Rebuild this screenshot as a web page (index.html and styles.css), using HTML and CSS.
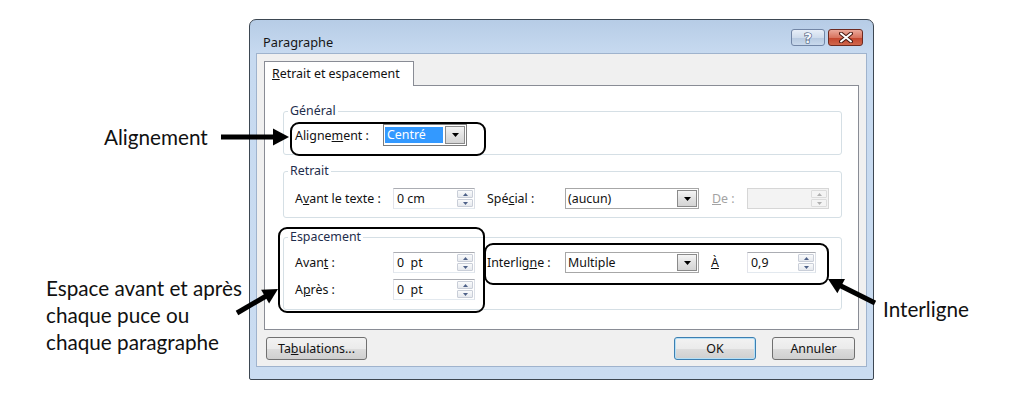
FILE: index.html
```html
<!DOCTYPE html>
<html lang="fr">
<head>
    <meta charset="UTF-8">
    <title>Paragraphe</title>
    <link rel="stylesheet" href="styles.css">
</head>
<body>
<div class="stage">
    <div class="dialog">
        <div class="titlebar">
            <span class="title">Paragraphe</span>
            <div class="caption">
                <span class="cap-btn cap-help">
                    <svg width="14" height="14" viewBox="0 0 14 14"><text x="7" y="12" text-anchor="middle" class="help-glyph">?</text></svg>
                </span>
                <span class="cap-btn cap-close">
                    <svg width="14" height="11" viewBox="0 0 14 11">
                        <path d="M2 1.5 L12 9.5 M12 1.5 L2 9.5" stroke="#4a1a12" stroke-width="4" stroke-linecap="round"/>
                        <path d="M2 1.5 L12 9.5 M12 1.5 L2 9.5" stroke="#ffffff" stroke-width="2" stroke-linecap="round"/>
                    </svg>
                </span>
            </div>
        </div>

        <div class="client">
            <div class="tab"><u>R</u>etrait et espacement</div>
            <div class="panel">
                <fieldset class="group group-general">
                    <legend>Général</legend>
                    <div class="row row-align">
                        <span class="lbl lbl-align">Aligne<u>m</u>ent :</span>
                        <span class="combo combo-align">
                            <span class="combo-val"><span class="sel">Centré</span></span>
                            <span class="drop"><svg width="7" height="4" viewBox="0 0 7 4"><polygon points="0,0 7,0 3.5,4" fill="#000"/></svg></span>
                        </span>
                    </div>
                </fieldset>

                <fieldset class="group group-retrait">
                    <legend>Retrait</legend>
                    <div class="row row-retrait">
                        <span class="lbl">A<u>v</u>ant le texte :</span>
                        <span class="spin">
                            <span class="spin-val">0 cm</span>
                            <span class="spin-btns">
                                <span class="spin-btn"><svg width="5" height="3" viewBox="0 0 5 3"><polygon points="0,3 2.5,0 5,3"/></svg></span>
                                <span class="spin-btn"><svg width="5" height="3" viewBox="0 0 5 3"><polygon points="0,0 5,0 2.5,3"/></svg></span>
                            </span>
                        </span>
                        <span class="lbl lbl-mid">Spé<u>c</u>ial :</span>
                        <span class="combo">
                            <span class="combo-val">(aucun)</span>
                            <span class="drop"><svg width="7" height="4" viewBox="0 0 7 4"><polygon points="0,0 7,0 3.5,4" fill="#000"/></svg></span>
                        </span>
                        <span class="lbl lbl-end lbl-off"><u>D</u>e :</span>
                        <span class="spin spin-off">
                            <span class="spin-val"></span>
                            <span class="spin-btns">
                                <span class="spin-btn"><svg width="5" height="3" viewBox="0 0 5 3"><polygon points="0,3 2.5,0 5,3"/></svg></span>
                                <span class="spin-btn"><svg width="5" height="3" viewBox="0 0 5 3"><polygon points="0,0 5,0 2.5,3"/></svg></span>
                            </span>
                        </span>
                    </div>
                </fieldset>

                <fieldset class="group group-space">
                    <legend>Espacement</legend>
                    <div class="row row-space">
                        <span class="lbl">Avan<u>t</u> :</span>
                        <span class="spin">
                            <span class="spin-val">0  pt</span>
                            <span class="spin-btns">
                                <span class="spin-btn"><svg width="5" height="3" viewBox="0 0 5 3"><polygon points="0,3 2.5,0 5,3"/></svg></span>
                                <span class="spin-btn"><svg width="5" height="3" viewBox="0 0 5 3"><polygon points="0,0 5,0 2.5,3"/></svg></span>
                            </span>
                        </span>
                        <span class="lbl lbl-mid">Interlig<u>n</u>e :</span>
                        <span class="combo">
                            <span class="combo-val">Multiple</span>
                            <span class="drop"><svg width="7" height="4" viewBox="0 0 7 4"><polygon points="0,0 7,0 3.5,4" fill="#000"/></svg></span>
                        </span>
                        <span class="lbl lbl-end lbl-a"><u>À</u></span>
                        <span class="spin spin-small">
                            <span class="spin-val">0,9</span>
                            <span class="spin-btns">
                                <span class="spin-btn"><svg width="5" height="3" viewBox="0 0 5 3"><polygon points="0,3 2.5,0 5,3"/></svg></span>
                                <span class="spin-btn"><svg width="5" height="3" viewBox="0 0 5 3"><polygon points="0,0 5,0 2.5,3"/></svg></span>
                            </span>
                        </span>
                    </div>
                    <div class="row row-space2">
                        <span class="lbl">A<u>p</u>rès :</span>
                        <span class="spin">
                            <span class="spin-val">0  pt</span>
                            <span class="spin-btns">
                                <span class="spin-btn"><svg width="5" height="3" viewBox="0 0 5 3"><polygon points="0,3 2.5,0 5,3"/></svg></span>
                                <span class="spin-btn"><svg width="5" height="3" viewBox="0 0 5 3"><polygon points="0,0 5,0 2.5,3"/></svg></span>
                            </span>
                        </span>
                    </div>
                </fieldset>
            </div>

            <div class="footer">
                <button class="btn btn-tabs">Ta<u>b</u>ulations...</button>
                <button class="btn btn-ok">OK</button>
                <button class="btn btn-cancel">Annuler</button>
            </div>
        </div>
    </div>

    <!-- annotations -->
    <div class="callout callout-align"></div>
    <div class="callout callout-space"></div>
    <div class="callout callout-inter"></div>

    <div class="note note-align">Alignement</div>
    <div class="note note-space">Espace avant et après<br>chaque puce ou<br>chaque paragraphe</div>
    <div class="note note-inter">Interligne</div>

    <svg class="arrows" width="1024" height="394" viewBox="0 0 1024 394">
        <line x1="221" y1="137" x2="275" y2="137"/>
        <polygon points="289,137 273,128.5 273,145.5"/>
        <line x1="237" y1="313" x2="267" y2="295.5"/>
        <polygon points="278,289 269.1,303.5 261.1,289.7"/>
        <line x1="875" y1="303" x2="840" y2="285.5"/>
        <polygon points="828,279 845,279 837.4,293.2"/>
    </svg>
</div>
</body>
</html>
```

FILE: styles.css
```css
body {
    margin: 0;
    background: #fff;
    font-family: "Noto Sans", "DejaVu Sans", sans-serif;
    font-size: 12.4px;
    color: #111;
}
.stage {
    position: relative;
    width: 1024px;
    height: 394px;
    padding: 19px 0 0 249px;
    box-sizing: border-box;
    overflow: hidden;
}

/* window frame */
.dialog {
    width: 625px;
    height: 361px;
    box-sizing: border-box;
    border: 1px solid #3d4752;
    border-radius: 7px 7px 2px 2px;
    background: linear-gradient(#b6cce6, #c7daf0 34px, #cadcf1);
    padding: 0 6px 12px 6px;
    display: flex;
    flex-direction: column;
}
.titlebar {
    height: 33px;
    display: flex;
    align-items: flex-start;
}
.title {
    margin: 14px 0 0 7px;
    font-size: 12.8px;
    line-height: 16px;
    color: #151515;
}
.caption {
    margin: 9px 4px 0 auto;
    display: flex;
    gap: 3px;
}
.cap-btn {
    height: 17px;
    box-sizing: border-box;
    border-radius: 3px;
    display: flex;
    align-items: center;
    justify-content: center;
}
.cap-help {
    width: 34px;
    border: 1px solid #7286a6;
    background: linear-gradient(#e8eff8, #cfdcec 50%, #b6c9e0 51%, #c9d9ec);
}
.help-glyph {
    font-family: "DejaVu Sans", sans-serif;
    font-weight: bold;
    font-size: 14px;
    fill: #f4f6fa;
    stroke: #3f5274;
    stroke-width: 1.2px;
    paint-order: stroke;
}
.cap-close {
    width: 35px;
    border: 1px solid #6d2a20;
    background: linear-gradient(#eba99b, #d8745f 50%, #c3442c 51%, #d0674c);
}

/* client area */
.client {
    flex: 1;
    background: #f0f0f0;
    border: 1px solid #9fb3cd;
    padding: 7px 7px 0 7px;
    display: flex;
    flex-direction: column;
}
.tab {
    align-self: flex-start;
    width: 150px;
    height: 25px;
    box-sizing: border-box;
    border: 1px solid #898c95;
    border-bottom: 0;
    background: #fff;
    padding: 4px 0 0 7px;
    line-height: 16px;
    white-space: nowrap;
    margin-bottom: -1px;
    position: relative;
    z-index: 1;
}
.panel {
    height: 245px;
    box-sizing: border-box;
    border: 1px solid #898c95;
    background: #fff;
    padding: 17px 16px 0 18px;
}

/* group boxes */
.group {
    margin: 0;
    border: 1px solid #d5dfe5;
    border-radius: 3px;
    padding: 0 10px 8px 11px;
    min-width: 0;
}
.group legend {
    padding: 0 2px;
    margin-left: -7px;
    line-height: 16px;
    color: #1e2d4c;
}
.group-retrait {
    margin-top: 8px;
}
.group-space {
    margin-top: 11px;
    padding-bottom: 9px;
}
.row {
    display: flex;
    align-items: center;
    height: 21px;
}
.row-align {
    margin-top: 5px;
    height: 22px;
}
.row-retrait {
    margin-top: 9px;
}
.row-space {
    margin-top: 7px;
}
.row-space2 {
    margin-top: 6px;
}
.lbl {
    flex: none;
    width: 98px;
    white-space: nowrap;
}
.lbl-align {
    width: 88px;
}
.lbl-mid {
    width: 78px;
    margin-left: 12px;
}
.lbl-end {
    width: 35px;
    margin-left: 13px;
}
.lbl-a {
    width: 36px;
    margin-left: 12px;
}
.lbl-off {
    color: #a3a3a3;
}

/* spin boxes */
.spin {
    flex: none;
    display: flex;
    width: 82px;
    height: 21px;
    box-sizing: border-box;
    border: 1px solid #abadb3;
    border-color: #abadb3 #dbdfe6 #e3e9ef #e2e3ea;
    background: #fff;
}
.spin-small {
    width: 69px;
}
.spin-val {
    flex: 1;
    padding-left: 3px;
    line-height: 19px;
    white-space: pre;
}
.spin-btns {
    width: 16px;
    display: flex;
    flex-direction: column;
    gap: 1px;
    padding: 1px 1px 1px 0;
}
.spin-btn {
    flex: 1;
    border: 1px solid #c9ced8;
    border-radius: 1px;
    background: linear-gradient(#fafbfc, #e6e9ee);
    display: flex;
    align-items: center;
    justify-content: center;
}
.spin-btn polygon {
    fill: #4e6188;
}
.spin-off {
    background: #f3f3f3;
    border-color: #d6d6d6;
}
.spin-off .spin-btn {
    border-color: #dcdcdc;
    background: #f4f4f4;
}
.spin-off .spin-btn polygon {
    fill: #b0b0b0;
}

/* combo boxes */
.combo {
    flex: none;
    display: flex;
    width: 134px;
    height: 21px;
    box-sizing: border-box;
    border: 1px solid #a7a7a7;
    background: #fff;
}
.combo-align {
    width: 84px;
    height: 22px;
    border-color: #7b7b7b;
}
.combo-val {
    flex: 1;
    padding-left: 2px;
    line-height: 19px;
}
.combo-align .combo-val {
    padding: 2px 1px 2px 1px;
}
.sel {
    display: block;
    height: 16px;
    line-height: 16px;
    padding-left: 2px;
    background: #3399ff;
    color: #fff;
}
.drop {
    width: 20px;
    margin: 1px;
    box-sizing: border-box;
    border: 1px solid #8a8a8a;
    background: linear-gradient(#f5f5f5, #e2e2e2 50%, #d4d4d4);
    display: flex;
    align-items: center;
    justify-content: center;
}

/* buttons */
.footer {
    display: flex;
    margin-top: 7px;
    padding: 0 4px 0 2px;
}
.btn {
    height: 23px;
    box-sizing: border-box;
    border: 1px solid #707070;
    border-radius: 3px;
    background: linear-gradient(#f2f2f2, #ebebeb 50%, #dddddd 51%, #cfcfcf);
    font-family: inherit;
    font-size: 12.4px;
    color: #111;
    padding: 0;
}
.btn-tabs {
    width: 101px;
}
.btn-ok {
    width: 82px;
    margin-left: auto;
    border-color: #3c7fb1;
    box-shadow: inset 0 0 0 1px #b5e0f7;
}
.btn-cancel {
    width: 83px;
    margin-left: 16px;
}

/* annotations drawn over the screenshot */
.callout {
    position: absolute;
    border: 2px solid #000;
    border-radius: 9px;
    box-sizing: border-box;
}
.callout-align {
    left: 290px;
    top: 122px;
    width: 196px;
    height: 34px;
}
.callout-space {
    left: 278px;
    top: 227px;
    width: 207px;
    height: 86px;
}
.callout-inter {
    left: 484px;
    top: 243px;
    width: 345px;
    height: 42px;
}
.note {
    position: absolute;
    font-family: Lato, "Open Sans", sans-serif;
    font-size: 20.7px;
    line-height: 24px;
    color: #111;
    white-space: nowrap;
}
.note-align {
    left: 104px;
    top: 125px;
}
.note-space {
    left: 46px;
    top: 275px;
    line-height: 27px;
}
.note-inter {
    left: 883px;
    top: 297px;
}
.arrows {
    position: absolute;
    left: 0;
    top: 0;
    pointer-events: none;
}
.arrows line {
    stroke: #000;
    stroke-width: 5;
}
.arrows polygon {
    fill: #000;
}
```
